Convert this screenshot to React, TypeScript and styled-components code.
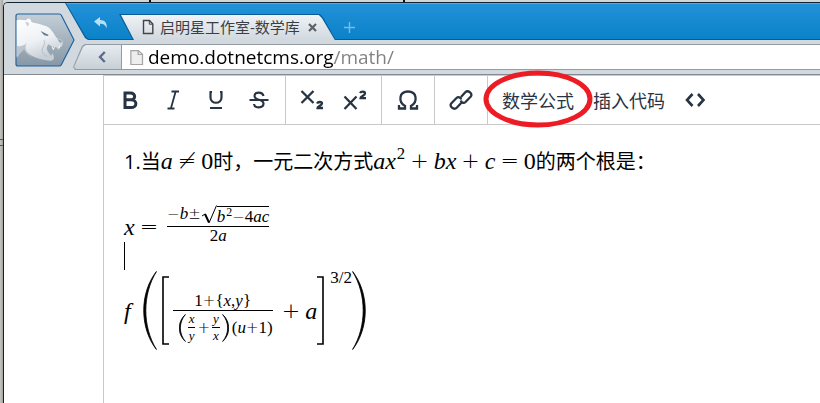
import React from 'react';
import styled, { createGlobalStyle } from 'styled-components';

const UI = '"Open Sans", "Noto Sans CJK SC", sans-serif';
const MATH = '"Liberation Serif", serif';
const INK = '#273444';

const Global = createGlobalStyle`
  *, *::before, *::after { box-sizing: border-box; }
  body { margin: 0; background: #cfcfcd; }
  button { font: inherit; color: inherit; border: 0; background: none; padding: 0; cursor: pointer; }
`;

/* ---------- browser window ---------- */

const Desktop = styled.div`
  display: flex;
  min-height: 100vh;
  padding: 2px 0 0 3px;
  font-family: ${UI};
  background:
    linear-gradient(#555, #555) 0 139px / 3px 1px no-repeat,
    linear-gradient(#555, #555) 0 145px / 3px 1px no-repeat,
    linear-gradient(#111, #111) 149px 0 / 2px 2px no-repeat,
    linear-gradient(#111, #111) 403px 0 / 2px 2px no-repeat,
    linear-gradient(90deg, #c6c6c4, #a2a29e) 0 0 / 3px 100% no-repeat,
    #d3d4d4;
`;

const BrowserWindow = styled.div`
  flex: 1;
  min-width: 0;
  display: flex;
  flex-direction: column;
  border-top: 1px solid #0c2338;
  border-left: 1px solid #0c2338;
  border-top-left-radius: 5px;
  overflow: hidden;
  background: #fff;
`;

const Chrome = styled.header`
  display: grid;
  grid-template-columns: 61px 1fr;
  background: #d1d8de;
  border-bottom: 1px solid #858b92;
`;

const LogoButton = styled.button`
  display: flex;
  justify-content: flex-end;
  align-items: center;
  height: 71px;
  overflow: visible;
  position: relative;
  z-index: 1;

  svg { flex: none; margin: 2px -10px 0 0; }
`;

const Bars = styled.div`
  display: flex;
  flex-direction: column;
  min-width: 0;
`;

const TabStrip = styled.div`
  display: flex;
  align-items: flex-end;
  height: 37px;
  padding-left: 28px;
  background: #0a5c94;
  clip-path: polygon(0 0, 100% 0, 100% 100%, 23px 100%, 20px 35px);
  position: relative;

  &::before {
    content: '';
    position: absolute;
    inset: 0 0 1px 1px;
    background: linear-gradient(#2391d8, #0a82c9);
    border-top: 1px solid #56aae0;
    clip-path: polygon(0 0, 100% 0, 100% 100%, 23px 100%, 20px 34px);
  }

  > * { position: relative; }
`;

const UndoButton = styled.button`
  display: flex;
  width: 16px;
  height: 16px;
  margin: 0 10px 9px 0;
`;

const Tab = styled.div`
  display: flex;
  align-items: center;
  height: 26px;
  padding: 0 19px 0 23px;
  background: #0a5c94;
  clip-path: polygon(0 0, calc(100% - 16px) 0, calc(100% - 13px) 3px, 100% 100%, 14px 100%);
  font-size: 15px;
  line-height: 24px;
  color: #3b3f44;

  &::before {
    content: '';
    position: absolute;
    inset: 1px 1px 0 1px;
    background: linear-gradient(#eef3f7, #d1d8de);
    clip-path: polygon(1px 0, calc(100% - 16px) 0, calc(100% - 13px) 3px, 100% 100%, 14px 100%);
  }

  > * { position: relative; }
  > svg { margin-right: 6px; }
`;

const TabTitle = styled.span`
  white-space: nowrap;
`;

const CloseButton = styled.button`
  display: flex;
  margin-left: 8px;
`;

const NewTabButton = styled.button`
  display: flex;
  margin: 0 0 7px 8px;
`;

const AddressRow = styled.div`
  display: flex;
  height: 26px;
  margin: 4px 0 4px 8px;
`;

const BackButton = styled.button`
  position: relative;
  flex: none;
  display: flex;
  align-items: center;
  justify-content: center;
  width: 48px;
  padding-left: 9px;
  background: #939ca5;
  clip-path: polygon(12px 0, 100% 0, 100% 100%, 2px 100%, 0 23px, 9px 2px);

  &::before {
    content: '';
    position: absolute;
    inset: 1px 0 1px 1px;
    background: linear-gradient(#e6ebef, #c8d0d7);
    clip-path: polygon(12px 0, 100% 0, 100% 100%, 2px 100%, 0 22px, 9px 2px);
  }

  svg { position: relative; }
`;

const AddressBox = styled.label`
  flex: 1;
  min-width: 0;
  display: flex;
  align-items: center;
  gap: 4px;
  padding-left: 7px;
  background: #fff;
  border: solid #939ca5;
  border-width: 1px 0 1px 1px;
`;

const AddressInput = styled.input`
  flex: 1;
  min-width: 0;
  height: 24px;
  padding: 0;
  border: 0;
  outline: 0;
  font: 19px/24px ${UI};
  color: transparent;
  background: linear-gradient(90deg, #000 186px, #808080 186px);
  background-clip: text;
  -webkit-background-clip: text;
`;

/* ---------- editor ---------- */

const Editor = styled.main`
  flex: 1;
  display: flex;
  flex-direction: column;
  margin-left: 99px;
  border: solid #c9c9c9;
  border-width: 1px 0 0 1px;
`;

const Toolbar = styled.div`
  display: flex;
  height: 49px;
  border-bottom: 1px solid #c9c9c9;
  color: ${INK};
`;

const Group = styled.div<{ $last?: boolean }>`
  display: flex;
  gap: 1px;
  padding: 0 5px;
  border-right: ${p => (p.$last ? '0' : '1px solid #c9c9c9')};
`;

const ToolButton = styled.button<{ $text?: boolean }>`
  position: relative;
  display: flex;
  align-items: center;
  justify-content: center;
  width: ${p => (p.$text ? 'auto' : '42px')};
  padding: ${p => (p.$text ? '0 9px' : '0')};
  font-size: 18px;
  white-space: nowrap;
`;

const Highlight = styled.svg`
  position: absolute;
  left: -10px;
  top: -7px;
  z-index: 1;
  pointer-events: none;
`;

const Content = styled.article`
  padding: 22px 20px;
  font-size: 20px;
  line-height: 30px;
  color: #000;
`;

const Sentence = styled.p`
  display: flex;
  align-items: baseline;
  margin: 0;
  white-space: nowrap;
`;

const Formula = styled.div<{ $gap?: boolean }>`
  display: flex;
  align-items: center;
  margin-top: ${p => (p.$gap ? '27px' : '1px')};
`;

const Caret = styled.div`
  width: 1px;
  height: 28px;
  margin-top: -7px;
  background: #000;
`;

/* ---------- math ---------- */

const M = styled.span`
  display: inline-flex;
  align-items: center;
  font: 24px/24px ${MATH};
`;

const Small = styled(M)`
  font-size: 17px;
  line-height: 14px;
`;

const Tiny = styled(M)`
  font-size: 13px;
  line-height: 12px;
  padding: 0 1px;
`;

const V = styled.i``;

const Op = styled.span<{ $tight?: boolean }>`
  font-family: "DejaVu Sans Light", "DejaVu Sans", sans-serif;
  font-weight: 200;
  font-size: ${p => (p.$tight ? '15px' : '22px')};
  margin: ${p => (p.$tight ? '0' : '0 5px')};
`;

const Sup = styled.span<{ $raised?: boolean }>`
  font-size: ${p => (p.$raised ? '17px' : '0.7em')};
  line-height: 14px;
  align-self: flex-start;
  margin-top: ${p => (p.$raised ? '0' : '-2px')};
  margin-left: ${p => (p.$raised ? '5px' : '1px')};
`;

const Frac = styled.span`
  display: inline-grid;
  grid-template-rows: 1fr 1px 1fr;
  justify-items: center;
  row-gap: 2px;
  margin: 0 4px;

  > :first-child { align-self: end; }
  > :last-child { align-self: start; }
`;

const InnerFrac = styled(Frac)`
  margin: 0 2px;
`;

const Rule = styled.span`
  width: 100%;
  height: 1px;
  background: #000;
`;

const Root = styled.span`
  display: inline-flex;
  align-items: flex-end;
`;

const Radicand = styled(Small)`
  height: 18px;
  align-items: flex-end;
  border-top: 1px solid #000;
`;

const Delimiter = styled.svg<{ $before?: number; $after?: number }>`
  flex: none;
  margin-left: ${p => p.$before ?? 0}px;
  margin-right: ${p => p.$after ?? 0}px;
`;

type ParenProps = { h: number; w: number; t: number; flip?: boolean; before?: number; after?: number };

const Paren = ({ h, w, t, flip, before, after }: ParenProps) => (
  <Delimiter $before={before} $after={after} width={w} height={h} viewBox={`0 0 ${w} ${h}`} aria-hidden="true">
    <path
      transform={flip ? `translate(${w} 0) scale(-1 1)` : undefined}
      d={`M${w - 0.6} 0.5 C${-w * 0.25} ${h * 0.28} ${-w * 0.25} ${h * 0.72} ${w - 0.6} ${h - 0.5} C${-w * 0.25 + t * 1.4} ${h * 0.7} ${-w * 0.25 + t * 1.4} ${h * 0.3} ${w - 0.6} 0.5Z`}
      fill="#000"
      stroke="#000"
      strokeWidth="0.8"
    />
  </Delimiter>
);

const Bracket = ({ flip }: { flip?: boolean }) => (
  <Delimiter $before={flip ? 0 : 4} width="8" height="69" viewBox="0 0 8 69" aria-hidden="true">
    <path d={flip ? 'M0 1H6V68H0' : 'M8 1H2V68H8'} fill="none" stroke="#000" strokeWidth="1.6" />
  </Delimiter>
);

/* ---------- drawings ---------- */

const BearLogo = () => (
  <svg width="60" height="54" viewBox="0 0 180 162">
    <defs>
      <linearGradient id="plate" x1="0" y1="0" x2="0" y2="1">
        <stop offset="0" stopColor="#c3ced7" />
        <stop offset="1" stopColor="#8797a5" />
      </linearGradient>
      <linearGradient id="fur" x1="0" y1="0" x2="0.4" y2="1">
        <stop offset="0" stopColor="#ffffff" />
        <stop offset="0.6" stopColor="#eef1f4" />
        <stop offset="1" stopColor="#c6ced6" />
      </linearGradient>
    </defs>
    <path d="M9 3H133Q137 3 139 7L177 81L139 155Q137 159 133 159H9Q3 159 3 153V9Q3 3 9 3Z" fill="url(#plate)" stroke="#1c62a0" strokeWidth="3.5" />
    <path d="M5 22C14 18 24 22 34 22C36 15 46 14 48 23L50 28C67 32 90 36 103 45C112 52 118 66 126 76L142 82Q145 90 141 100L134 103L130 111L126 104C116 101 107 101 101 94C95 100 93 108 99 116L108 128L113 120L117 132Q117 142 108 143C90 143 72 138 58 132C43 125 33 117 28 108C17 116 9 128 5 134Z" fill="url(#fur)" />
    <path d="M5 98C18 102 30 98 36 88C30 99 31 108 36 118C44 128 54 132 62 134C45 132 31 121 27 110C20 116 11 122 5 130Z" fill="#b0bcc7" opacity="0.8" />
    <path d="M77 54L101 66L98 69L88 67Q82 62 77 54Z" fill="#66788a" />
    <path d="M31 27Q39 25 43 33L38 41Q33 35 31 27Z" fill="#ccd4db" />
    <path d="M87 82C92 91 85 100 82 108C80 117 86 126 96 130" fill="none" stroke="#b4bfc9" strokeWidth="3" />
    <path d="M127 77L142 83L138 91Q131 87 127 77Z" fill="#9aa8b5" />
    <path d="M133 98V106M112 101L115 110L118 103" stroke="#fff" strokeWidth="3" fill="none" />
  </svg>
);

const Stroke = ({ d, w = 2.2, size = 24 }: { d: string; w?: number; size?: number }) => (
  <svg width={size} height={size} viewBox="0 0 24 24" fill="none" stroke={INK} strokeWidth={w} aria-hidden="true">
    <path d={d} />
  </svg>
);

const PageIcon = ({ light }: { light?: boolean }) => (
  <svg width={light ? 15 : 12} height={light ? 17 : 16} viewBox="0 0 12 16" preserveAspectRatio="none" aria-hidden="true">
    <path d="M1.5 1.5H7.5L10.8 5V14.5H1.5Z" fill={light ? '#eee' : 'none'} stroke={light ? '#a5a5a5' : '#444'} strokeWidth={light ? 1 : 1.4} />
    <path d="M7.3 1.5V5.2H10.8" fill="none" stroke={light ? '#a5a5a5' : '#444'} />
  </svg>
);

export default function App() {
  return (
    <>
      <Global />
      <Desktop>
        <BrowserWindow>
          <Chrome>
            <LogoButton aria-label="Browser menu"><BearLogo /></LogoButton>
            <Bars>
              <TabStrip>
                <UndoButton aria-label="Reopen tab">
                  <svg width="16" height="16" viewBox="0 0 16 16" fill="#b9dff6">
                    <path d="M1 6.5L7 2V5C12 5 14.5 8 13.5 13.5C12.5 10 10.5 8.7 7 8.7V11.5Z" />
                  </svg>
                </UndoButton>
                <Tab>
                  <PageIcon />
                  <TabTitle>启明星工作室-数学库</TabTitle>
                  <CloseButton aria-label="Close tab">
                    <svg width="9" height="9" viewBox="0 0 9 9" stroke="#5c6268" strokeWidth="2.2"><path d="M1 1L8 8M8 1L1 8" /></svg>
                  </CloseButton>
                </Tab>
                <NewTabButton aria-label="New tab">
                  <svg width="11" height="11" viewBox="0 0 11 11" stroke="#75bce8" strokeWidth="1.4"><path d="M5.5 0V11M0 5.5H11" /></svg>
                </NewTabButton>
              </TabStrip>
              <AddressRow>
                <BackButton aria-label="Back">
                  <svg width="8" height="12" viewBox="0 0 8 12" fill="none" stroke="#5d6b8f" strokeWidth="2.4"><path d="M6.8 1L2 6L6.8 11" /></svg>
                </BackButton>
                <AddressBox>
                  <PageIcon light />
                  <AddressInput aria-label="Address" defaultValue="demo.dotnetcms.org/math/" spellCheck={false} />
                </AddressBox>
              </AddressRow>
            </Bars>
          </Chrome>

          <Editor>
            <Toolbar role="toolbar" aria-label="Formatting">
              <Group>
                <ToolButton aria-label="Bold"><Stroke w={3} d="M7 5H12.500C18 5 18 11.800 12.500 11.800H7M7 11.800H13C19.500 11.800 19.500 19.500 13 19.500H7V3.500" /></ToolButton>
                <ToolButton aria-label="Italic"><Stroke w={1.8} d="M14.500 4L10 20M10.500 3.500H18M6.500 20.500H13.500" /></ToolButton>
                <ToolButton aria-label="Underline"><Stroke w={2.2} d="M6.500 4V9.500C6.500 16.500 17.500 16.500 17.500 9.500V4M5.500 4H8M16 4H18.500M6 20H18" /></ToolButton>
                <ToolButton aria-label="Strikethrough"><Stroke w={2.2} d="M16.500 8C15.500 3.500 7.500 3.500 7.500 8C7.500 13 16.500 10.500 16.500 15.500C16.500 20.500 7.500 20.500 7 16M2.500 12H21.500" /></ToolButton>
              </Group>
              <Group>
                <ToolButton aria-label="Subscript"><Stroke w={2.3} d="M1.500 3L13.500 15M13.500 3L1.500 15M17 15.500C18 13.500 22 13.500 22 15.500C22 17.500 17.500 18.500 17.500 20H23" /></ToolButton>
                <ToolButton aria-label="Superscript"><Stroke w={2.3} d="M1.500 8.500L13.500 21M13.500 8.500L1.500 21M17 5C18 3 22 3 22 5.500C22 7.500 17.500 8.500 17.500 10.200H23" /></ToolButton>
              </Group>
              <Group>
                <ToolButton aria-label="Special character"><Stroke w={2.3} d="M3 17V20.500H9V18C2 13.500 3 3.500 12 3.500S22 13.500 15 18V20.500H21V17" /></ToolButton>
              </Group>
              <Group>
                <ToolButton aria-label="Link"><Stroke w={2.3} d="M12 9L16.300 4.300C19 1.500 24.500 5.800 21.600 8.800L16.500 14C14.800 15.600 12.200 14.800 11.800 12.500M12.200 15L7.700 19.700C5 22.500 -0.500 18.200 2.400 15.200L7.500 10C9.200 8.400 11.800 9.200 12.200 11.500" /></ToolButton>
              </Group>
              <Group $last>
                <ToolButton $text>
                  数学公式
                  <Highlight width="110" height="60" viewBox="0 0 110 60" fill="none" stroke="#ed1c24" strokeWidth="5">
                    <ellipse cx="55" cy="30" rx="52" ry="26" />
                  </Highlight>
                </ToolButton>
                <ToolButton $text>插入代码</ToolButton>
                <ToolButton aria-label="Source"><Stroke w={2.6} d="M8.500 6L3 12L8.500 18M14 6L19.500 12L14 18" /></ToolButton>
              </Group>
            </Toolbar>

            <Content>
              <Sentence>
                1.当
                <M><V>a</V><Op>≠</Op>0</M>
                时，一元二次方式
                <M><V>ax</V><Sup>2</Sup><Op>+</Op><V>bx</V><Op>+</Op><V>c</V><Op>=</Op>0</M>
                的两个根是：
              </Sentence>

              <Formula $gap>
                <M>
                  <V>x</V><Op>=</Op>
                  <Frac>
                    <Small>
                      <Op $tight>−</Op><V>b</V><Op $tight>±</Op>
                      <Root>
                        <svg width="16" height="20" viewBox="0 0 16 20" fill="none" stroke="#000" aria-hidden="true">
                          <path d="M1 12L4 10" /><path d="M4 10L8 18.500" strokeWidth="2" /><path d="M8 19L15.500 1.500" />
                        </svg>
                        <Radicand><V>b</V><Sup>2</Sup><Op $tight>−</Op>4<V>ac</V></Radicand>
                      </Root>
                    </Small>
                    <Rule />
                    <Small>2<V>a</V></Small>
                  </Frac>
                </M>
              </Formula>
              <Caret />

              <Formula>
                <M>
                  <V>f</V>
                  <Paren h={79} w={14} t={2} before={12} />
                  <Bracket />
                  <Frac>
                    <Small>1<Op $tight>+</Op>{'{'}<V>x</V>,<V>y</V>{'}'}</Small>
                    <Rule />
                    <Small>
                      <Paren h={28} w={7} t={1} before={6} />
                      <InnerFrac><Tiny><V>x</V></Tiny><Rule /><Tiny><V>y</V></Tiny></InnerFrac>
                      <Op $tight>+</Op>
                      <InnerFrac><Tiny><V>y</V></Tiny><Rule /><Tiny><V>x</V></Tiny></InnerFrac>
                      <Paren h={28} w={7} t={1} flip after={3} />
                      (<V>u</V><Op $tight>+</Op>1)
                    </Small>
                  </Frac>
                  <Op>+</Op><V>a</V>
                  <Bracket flip />
                  <Sup $raised>3/2</Sup>
                  <Paren h={79} w={14} t={2} flip />
                </M>
              </Formula>
            </Content>
          </Editor>
        </BrowserWindow>
      </Desktop>
    </>
  );
}
